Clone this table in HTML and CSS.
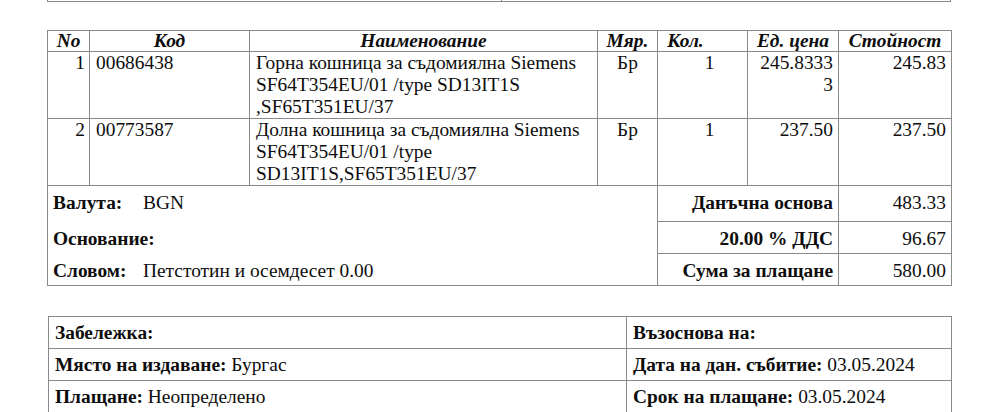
FILE: index.html
```html
<!DOCTYPE html>
<html lang="bg">
<head>
<meta charset="utf-8">
<title>Фактура</title>
<link rel="stylesheet" href="styles.css">
</head>
<body>
<div class="page">
  <div class="topbox">
    <div class="topbox-l"></div>
    <div class="topbox-r"></div>
  </div>

  <table class="items">
    <colgroup>
      <col class="c-no"><col class="c-code"><col class="c-name"><col class="c-unit"><col class="c-qty"><col class="c-price"><col class="c-total">
    </colgroup>
    <thead>
      <tr class="head">
        <th>No</th>
        <th>Код</th>
        <th>Наименование</th>
        <th>Мяр.</th>
        <th class="h-qty">Кол.</th>
        <th>Ед. цена</th>
        <th>Стойност</th>
      </tr>
    </thead>
    <tbody>
      <tr class="item">
        <td class="num">1</td>
        <td class="code">00686438</td>
        <td class="name">Горна кошница за съдомиялна Siemens SF64T354EU/01 /type SD13IT1S ,SF65T351EU/37</td>
        <td class="unit">Бр</td>
        <td class="qty">1</td>
        <td class="price">245.83333</td>
        <td class="total">245.83</td>
      </tr>
      <tr class="item">
        <td class="num">2</td>
        <td class="code">00773587</td>
        <td class="name">Долна кошница за съдомиялна Siemens SF64T354EU/01 /type SD13IT1S,SF65T351EU/37</td>
        <td class="unit">Бр</td>
        <td class="qty">1</td>
        <td class="price">237.50</td>
        <td class="total">237.50</td>
      </tr>
      <tr class="sum sum-1">
        <td class="info info-first" colspan="4"><span class="lbl lbl-fixed">Валута:</span>BGN</td>
        <td class="sum-lbl" colspan="2">Данъчна основа</td>
        <td class="sum-val">483.33</td>
      </tr>
      <tr class="sum sum-2">
        <td class="info info-mid" colspan="4"><span class="lbl">Основание:</span></td>
        <td class="sum-lbl" colspan="2">20.00 % ДДС</td>
        <td class="sum-val">96.67</td>
      </tr>
      <tr class="sum sum-3">
        <td class="info info-last" colspan="4"><span class="lbl lbl-fixed">Словом:</span>Петстотин и осемдесет 0.00</td>
        <td class="sum-lbl" colspan="2">Сума за плащане</td>
        <td class="sum-val">580.00</td>
      </tr>
    </tbody>
  </table>

  <table class="notes">
    <colgroup><col class="n-left"><col class="n-right"></colgroup>
    <tbody>
      <tr>
        <td><span class="lbl">Забележка:</span></td>
        <td><span class="lbl">Възоснова на:</span></td>
      </tr>
      <tr>
        <td><span class="lbl">Място на издаване:</span> Бургас</td>
        <td><span class="lbl">Дата на дан. събитие:</span> 03.05.2024</td>
      </tr>
      <tr>
        <td><span class="lbl">Плащане:</span> Неопределено</td>
        <td><span class="lbl">Срок на плащане:</span> 03.05.2024</td>
      </tr>
    </tbody>
  </table>
</div>
</body>
</html>
```

FILE: styles.css
```css
html, body {
  margin: 0;
  padding: 0;
  background: #ffffff;
}

body {
  font-family: "Liberation Serif", "Times New Roman", serif;
  font-size: 19.4px;
  color: #0d0d0d;
}

.page {
  padding-left: 47px;
  width: 904px;
}

.topbox {
  display: flex;
  height: 1px;
  border: 1px solid #8a8a8a;
  border-top: none;
}

.topbox-l {
  width: 453px;
  border-right: 1px solid #8a8a8a;
}

.topbox-r {
  flex: 1;
}

table {
  border-collapse: collapse;
  table-layout: fixed;
  width: 904px;
}

td, th {
  border: 1px solid #8a8a8a;
  padding: 0;
  vertical-align: top;
}

.items {
  margin-top: 28px;
}

.c-no { width: 42px; }
.c-code { width: 160px; }
.c-name { width: 348px; }
.c-unit { width: 60px; }
.c-qty { width: 90px; }
.c-price { width: 91px; }
.c-total { width: 113px; }

.head th {
  font-weight: bold;
  font-style: italic;
  text-align: center;
  height: 20px;
  line-height: 20px;
  vertical-align: middle;
}

.head .h-qty {
  padding-right: 34px;
}

.item td {
  line-height: 22px;
}

.item .num {
  text-align: right;
  padding-right: 4px;
}

.item .code,
.item .name {
  padding-left: 6px;
}

.item .unit {
  text-align: center;
}

.item .qty {
  text-align: center;
  padding-left: 14px;
}

.item .price {
  text-align: right;
  padding-right: 5px;
  padding-left: 8px;
  word-break: break-all;
}

.item .total {
  text-align: right;
  padding-right: 5px;
}

.sum td {
  vertical-align: top;
  line-height: 22px;
  padding-top: 6px;
}

.sum-1 { height: 36px; }
.sum-2 { height: 32px; }
.sum-3 { height: 32px; }

.sum-lbl {
  font-weight: bold;
  text-align: right;
  padding-right: 5px;
}

.sum-val {
  text-align: right;
  padding-right: 5px;
}

.info {
  padding-left: 5px;
}

.info-first { border-bottom: none; }
.info-mid { border-top: none; border-bottom: none; }
.info-last { border-top: none; }

.lbl {
  font-weight: bold;
}

.lbl-fixed {
  display: inline-block;
  width: 90px;
}

.notes {
  margin-top: 30px;
  margin-left: 1px;
  width: 903px;
}

.n-left { width: 578px; }
.n-right { width: 325px; }

.notes td {
  height: 31px;
  vertical-align: middle;
  padding-left: 6px;
}
```
